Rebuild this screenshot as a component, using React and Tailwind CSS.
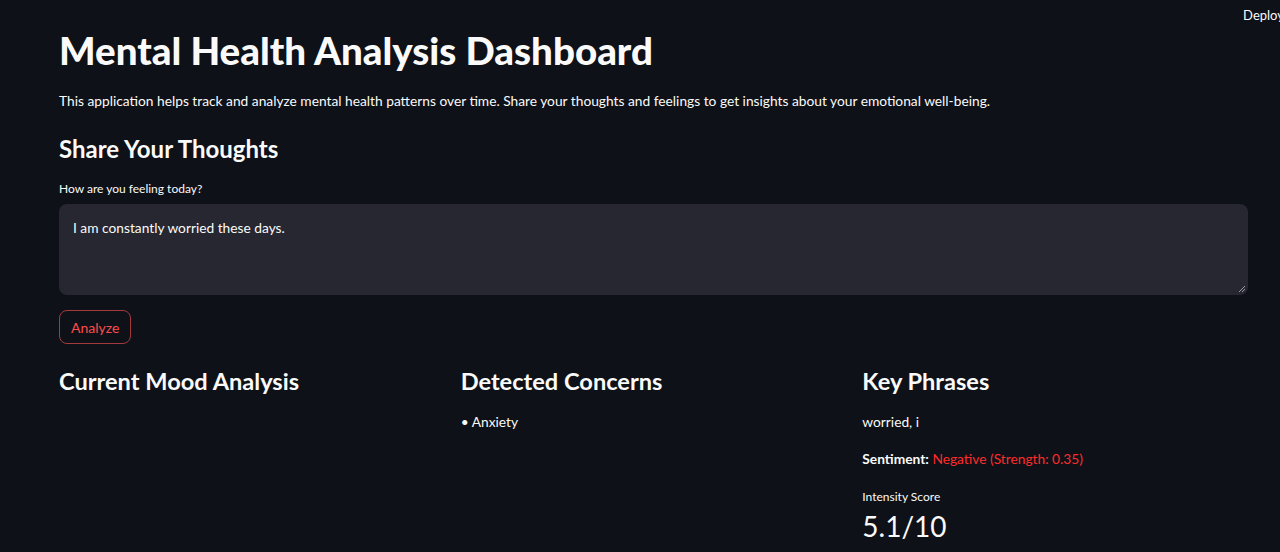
export default function App() {
  const font = { fontFamily: "Lato, 'Open Sans', sans-serif" };
  return (
    <div className="relative min-h-[552px] w-full overflow-hidden bg-[#0e1117] text-[#fafafa]" style={font}>
      <div className="absolute right-[-4px] top-[7px] text-[13px] leading-[16px] text-[#fafafa]">Deploy</div>
      <div className="pl-[59px] pr-[32px] pt-[28px]">
        <h1 className="text-[38.5px] font-black leading-[44px]">Mental Health Analysis Dashboard</h1>
        <p className="mt-[19px] text-[13.75px] leading-[20px]">This application helps track and analyze mental health patterns over time. Share your thoughts and feelings to get insights about your emotional well-being.</p>
        <h2 className="mt-[22px] text-[24px] font-bold leading-[32px]">Share Your Thoughts</h2>
        <label className="mt-[16px] block text-[12px] leading-[16px]">How are you feeling today?</label>
        <div className="relative mt-[7px] h-[91px] rounded-[8px] bg-[#262730] px-[14px] py-[14px] text-[13.75px] leading-[20px]">
          I am constantly worried these days.
          <svg className="absolute bottom-[2px] right-[2px]" width="8" height="8" viewBox="0 0 8 8">
            <path d="M7 1 L1 7 M7 4 L4 7" stroke="#9a9aa2" strokeWidth="1" />
          </svg>
        </div>
        <button className="mt-[15px] h-[34px] rounded-[8px] border border-[#a33a3e] bg-transparent px-[11px] text-[14px] text-[#ff4b4b]">Analyze</button>
        <div className="mt-[21px] grid grid-cols-3 gap-[16px]">
          <div>
            <h3 className="text-[23.6px] font-bold leading-[32px]">Current Mood Analysis</h3>
          </div>
          <div>
            <h3 className="text-[23.6px] font-bold leading-[32px]">Detected Concerns</h3>
            <p className="mt-[15px] text-[13.75px] leading-[20px]">• Anxiety</p>
          </div>
          <div>
            <h3 className="text-[23.6px] font-bold leading-[32px]">Key Phrases</h3>
            <p className="mt-[15px] text-[13.75px] leading-[20px]">worried, i</p>
            <p className="mt-[17px] text-[13.75px] leading-[20px]"><span className="font-bold">Sentiment:</span> <span className="text-[#ff2b2b]">Negative (Strength: 0.35)</span></p>
            <p className="mt-[20px] text-[12px] leading-[16px]">Intensity Score</p>
            <p className="mt-[3px] text-[28px] leading-[36px]">5.1/10</p>
          </div>
        </div>
      </div>
    </div>
  );
}
